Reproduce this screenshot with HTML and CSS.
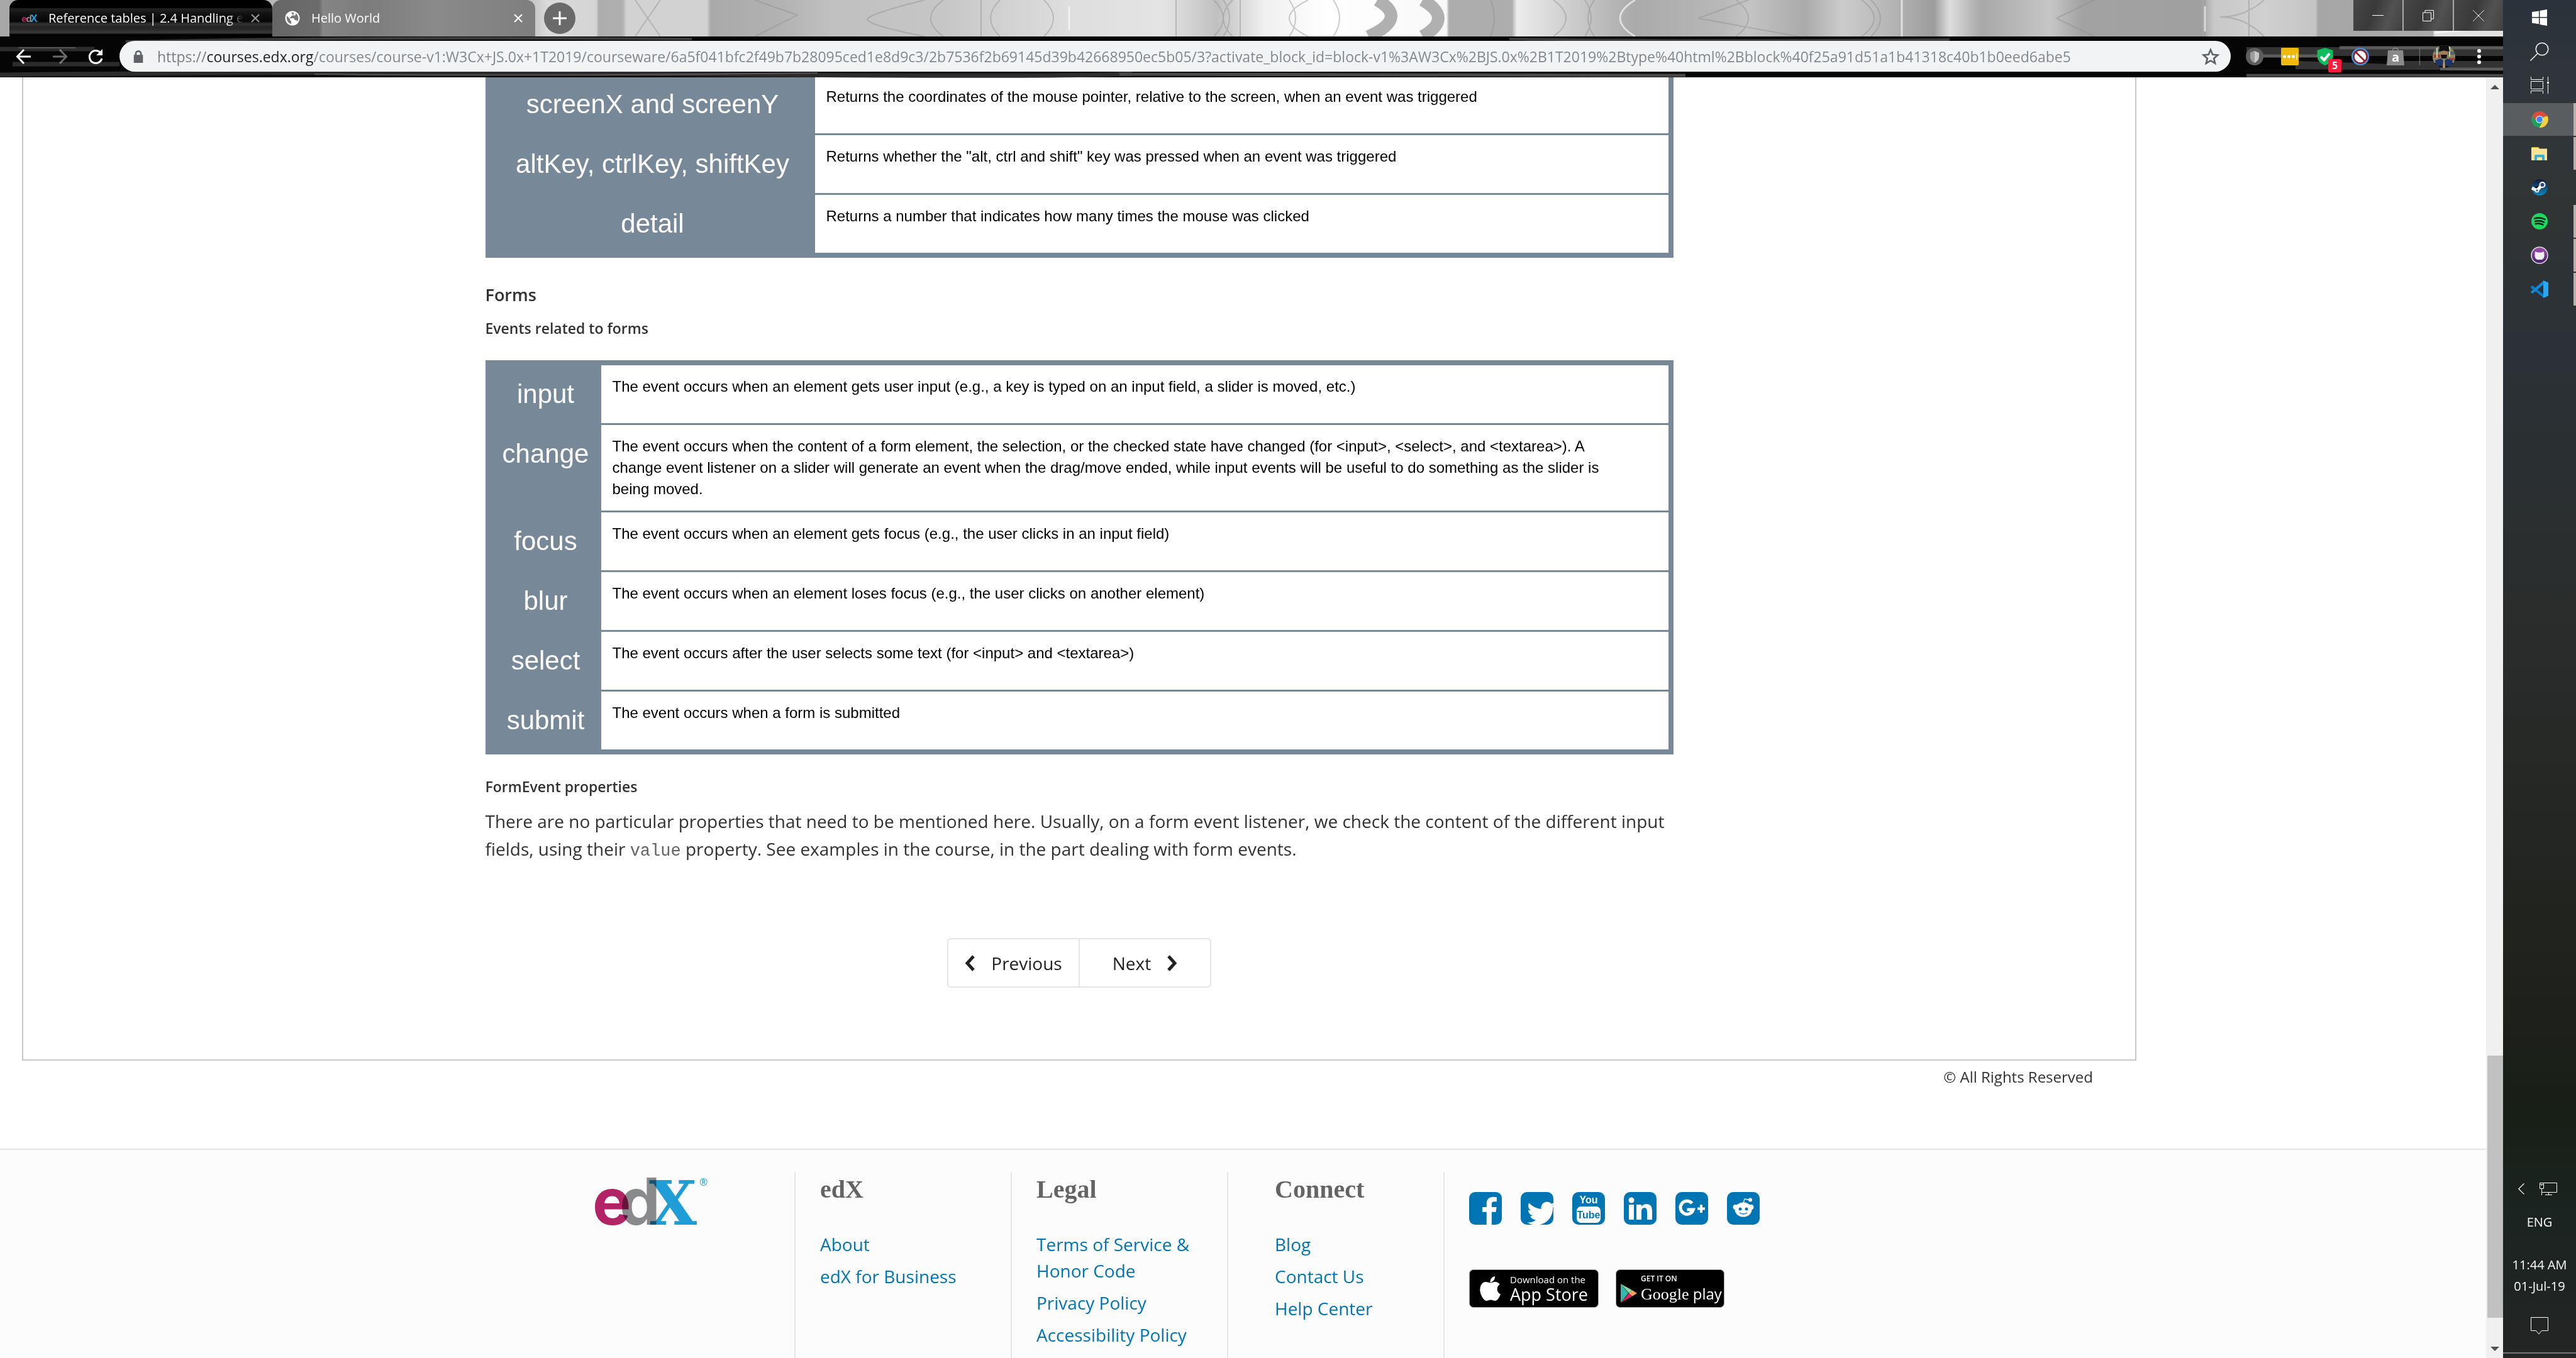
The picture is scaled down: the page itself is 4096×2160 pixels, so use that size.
FILE: index.html
```html
<!DOCTYPE html>
<html lang="en">
<head>
<meta charset="utf-8">
<title>Reference tables | 2.4 Handling events</title>
<link rel="stylesheet" href="styles.css">
</head>
<body>
<div class="browser">
  <header class="tabstrip">
    <svg class="tabstrip-art" viewBox="0 0 3980 58" preserveAspectRatio="none" aria-hidden="true">
      <g fill="none" stroke="#8f8f8f" stroke-width="2" opacity=".45">
        <path d="M1010 0l40 58M1050 0l-40 58M1200 0l68 24-68 34M1470 0q-80 20-90 29t90 29M1500 0q-40 29 0 58M1560 0v58M1590 0q-30 29 0 58M1660 0q30 29 0 58M1870 0v58M1930 0q30 29 0 58M1945 0q20 29 0 58M1960 0q-30 29 0 58M1972 0v58M2080 0q-60 29 0 58M2050 0q20 29 0 58M2120 0q20 29 0 58M2370 0q12 29 0 58M2470 0q40 29 0 58M2520 0q20 29 0 58M2535 0q-20 29 0 58M2700 29l80-29M2700 29l160 29M2760 0q40 29 0 58M2960 0q40 29 0 58M2975 0q30 29 0 58M3270 29l60-29M3270 29l60 29M3506 0v58M3530 27q40 0 70-27M3530 27q40 0 70 31M3576 0v58"/>
      </g>
      <g fill="none" stroke="#fff" stroke-width="3" opacity=".6">
        <path d="M2180 0q30 29 0 58M2600 0q-48 29 0 58M3024 0v58M1700 10v38M3506 10v40M3870 52l100-8"/>
      </g>
      <g fill="none" stroke="#b0b0b0" stroke-width="20">
        <path d="M2190 0q50 29 -14 58M2262 0q50 29 0 58"/>
      </g>
    </svg>
    <nav class="tabs" aria-label="Tabs">
      <div class="tab tab-current">
        <svg class="favicon" viewBox="0 0 30 30"><text x="-1" y="22" class="fav-e">e</text><text x="8" y="22" class="fav-d">d</text><text x="17" y="22" class="fav-x">X</text></svg>
        <span class="tab-title tab-title-fade">Reference tables | 2.4 Handling ev</span>
        <button class="tab-close" aria-label="Close tab"><svg viewBox="0 0 14 14"><path d="M1 1l12 12M13 1L1 13"/></svg></button>
      </div>
      <div class="tab tab-other">
        <svg class="favicon" viewBox="0 0 24 24"><circle cx="12" cy="12" r="11.5" fill="#fff"/><path fill="#777" d="M3 8l5 5v2l2 2v4C5 20 2 15 3 8zM10 3h4v3l-2 2h-2v2H8v2h6l2 3h2l2 2c3-5 1-10-3-13v3l-3 1z"/></svg>
        <span class="tab-title">Hello World</span>
        <button class="tab-close tab-close-strong" aria-label="Close tab"><svg viewBox="0 0 14 14"><path d="M1 1l12 12M13 1L1 13"/></svg></button>
      </div>
      <button class="new-tab" aria-label="New tab"><svg viewBox="0 0 22 22"><path d="M11 0v22M0 11h22"/></svg></button>
    </nav>
    <div class="window-buttons">
      <button aria-label="Minimize"><svg viewBox="0 0 20 20"><path d="M1 9.500h18"/></svg></button>
      <button aria-label="Restore"><svg viewBox="0 0 20 20"><path d="M1.500 5h13v13.500h-13zM5 5V1.500h13.500V15H15"/></svg></button>
      <button aria-label="Close"><svg viewBox="0 0 20 20"><path d="M1 1l18 18M19 1L1 19"/></svg></button>
    </div>
  </header>

  <div class="toolbar">
    <svg class="toolbar-art" viewBox="0 0 3980 65" preserveAspectRatio="none" aria-hidden="true">
      <g fill="none">
        <path stroke="#3c3c3c" stroke-width="4" d="M200 8q400-8 900-4M2400 4q300 4 700 1"/>
        <path stroke="#2c2c2c" stroke-width="7" d="M0 20h150M20 44h170M0 61q500-6 1100-1t700-1"/>
        <path stroke="#555" stroke-width="2" d="M30 18h90M500 60q300 4 800-2M1780 60l900 3"/>
        <path stroke="#484848" stroke-width="5" d="M1780 60q500 2 900 2M3572 62h408"/>
        <path stroke="#333" stroke-width="14" d="M3572 24h408M3650 46h330"/>
        <path stroke="#5c5c5c" stroke-width="5" d="M3720 18h260M3590 31h120M3880 52h100"/>
        <path stroke="#0a0a0a" stroke-width="5" d="M3572 54l408 3M3640 36l180 6"/>
      </g>
    </svg>
    <button class="nav-btn" aria-label="Back"><svg viewBox="0 0 24 24"><path d="M23 12H2M12 1L1.500 12 12 23"/></svg></button>
    <button class="nav-btn nav-btn-dim" aria-label="Forward"><svg viewBox="0 0 24 24"><path d="M1 12h21M12 1l10.500 11L12 23"/></svg></button>
    <button class="nav-btn" aria-label="Reload"><svg viewBox="0 0 24 24"><path d="M20 6a10 10 0 1 0 2 9"/><path class="solid" d="M23 0v10H13z"/></svg></button>
    <div class="omnibox">
      <svg class="lock" viewBox="0 0 16 22"><path fill="#5f6368" d="M2 8V6a6 6 0 0 1 12 0v2h2v14H0V8zm3 0h6V6a3 3 0 0 0-6 0z"/></svg>
      <input class="url" aria-label="Address" value="https://courses.edx.org/courses/course-v1:W3Cx+JS.0x+1T2019/courseware/6a5f041bfc2f49b7b28095ced1e8d9c3/2b7536f2b69145d39b42668950ec5b05/3?activate_block_id=block-v1%3AW3Cx%2BJS.0x%2B1T2019%2Btype%40html%2Bblock%40f25a91d51a1b41318c40b1b0eed6abe5">
      <button class="star" aria-label="Bookmark"><svg viewBox="0 0 26 26"><path fill="none" stroke="#5f6368" stroke-width="2.500" d="M13 3l3 7 7.500.700-5.700 5 1.800 7.300L13 19l-6.600 4 1.800-7.300-5.700-5L10 10z"/></svg></button>
    </div>
    <div class="extensions">
      <button aria-label="Shield extension"><svg viewBox="0 0 28 28"><circle cx="14" cy="14" r="14" fill="#5d5d5d"/><path fill="#c8c8c8" d="M14 5l7 3v7q-1 6-7 9-6-3-7-9V8z"/><path fill="#9c9c9c" d="M14 5v19q-6-3-7-9V8z"/></svg></button>
      <button aria-label="Password extension"><svg viewBox="0 0 28 28"><rect width="28" height="28" rx="2" fill="#f0b90e"/><g fill="#fff"><circle cx="5.500" cy="14" r="2.500"/><circle cx="12.500" cy="14" r="2.500"/><circle cx="19.500" cy="14" r="2.500"/><path d="M24 9h1.500v10H24z"/></g></svg></button>
      <button aria-label="Blocker extension" class="has-badge"><svg viewBox="0 0 28 28"><path fill="#0fbc5a" d="M14 0l12.500 4v10q-1 10-12.500 14Q2.500 24 1.500 14V4z"/><path fill="none" stroke="#fff" stroke-width="4" d="M7 14l5.500 5.500L21 9"/></svg><span class="badge">5</span></button>
      <button aria-label="Deny extension"><svg viewBox="0 0 28 28"><circle cx="14" cy="14" r="14" fill="#3f95e8"/><circle cx="14" cy="14" r="10.500" fill="#fff" stroke="#8d2027" stroke-width="2.500"/><path stroke="#8d2027" stroke-width="2.500" d="M7 7l14 14"/></svg></button>
      <button aria-label="Shopping extension"><svg viewBox="0 0 28 28"><path fill="#8a8a8a" d="M2 4h24l2 24H0z"/><path fill="none" stroke="#8a8a8a" stroke-width="1.500" d="M9 7q0-7 5-6.500T19 7"/><text x="14" y="22" class="ext-letter">a</text></svg></button>
      <span class="toolbar-divider"></span>
      <button class="avatar" aria-label="Profile"><svg viewBox="0 0 36 36"><clipPath id="av"><circle cx="18" cy="18" r="18"/></clipPath><g clip-path="url(#av)"><path fill="#8b8268" d="M0 0h36v36H0z"/><path fill="#4a6a62" d="M0 6h12v5H0zM24 10h12v5H24z"/><path fill="#a0442f" d="M2 15h10v5H2zM26 20h10v4H26z"/><path fill="#d6cfae" d="M6 2h2v18H6zM26 2h2v16h-2z"/><path fill="#0d1012" d="M11 0h14l2 10-9-3-8 3zM0 28h36v8H0z"/><ellipse cx="18" cy="13" rx="5.500" ry="7" fill="#a47a59"/><path fill="#111" d="M11 6q7-6 14 0l-1 4q-6-3-12 0zM13 15h10l-1 6h-8z"/><path fill="#1c3466" d="M4 24l9-3 5 4 5-4 9 3-2 9H6z"/><path fill="#c39a55" d="M17 24h2l1 12h-4z"/></g></svg></button>
      <button class="menu" aria-label="Menu"><svg viewBox="0 0 6 24"><g fill="#fff"><circle cx="3" cy="3" r="3"/><circle cx="3" cy="12" r="3"/><circle cx="3" cy="21" r="3"/></g></svg></button>
    </div>
  </div>

  <div class="viewport">
    <div class="page">
      <main class="course">
        <article class="lesson">
          <table class="events events-mouse">
            <tr><th scope="row">screenX and screenY</th><td>Returns the coordinates of the mouse pointer, relative to the screen, when an event was triggered</td></tr>
            <tr><th scope="row">altKey, ctrlKey, shiftKey</th><td>Returns whether the "alt, ctrl and shift" key was pressed when an event was triggered</td></tr>
            <tr><th scope="row">detail</th><td>Returns a number that indicates how many times the mouse was clicked</td></tr>
          </table>
          <h3>Forms</h3>
          <h4>Events related to forms</h4>
          <table class="events events-form">
            <tr><th scope="row">input</th><td>The event occurs when an element gets user input (e.g., a key is typed on an input field, a slider is moved, etc.)</td></tr>
            <tr><th scope="row">change</th><td>The event occurs when the content of a form element, the selection, or the checked state have changed (for &lt;input&gt;, &lt;select&gt;, and &lt;textarea&gt;). A change event listener on a slider will generate an event when the drag/move ended, while input events will be useful to do something as the slider is being moved.</td></tr>
            <tr><th scope="row">focus</th><td>The event occurs when an element gets focus (e.g., the user clicks in an input field)</td></tr>
            <tr><th scope="row">blur</th><td>The event occurs when an element loses focus (e.g., the user clicks on another element)</td></tr>
            <tr><th scope="row">select</th><td>The event occurs after the user selects some text (for &lt;input&gt; and &lt;textarea&gt;)</td></tr>
            <tr><th scope="row">submit</th><td>The event occurs when a form is submitted</td></tr>
          </table>
          <h4>FormEvent properties</h4>
          <p>There are no particular properties that need to be mentioned here. Usually, on a form event listener, we check the content of the different input fields, using their <code>value</code> property. See examples in the course, in the part dealing with form events.</p>
          <nav class="sequence" aria-label="Sequence">
            <button><svg viewBox="0 0 16 26"><path d="M14 2L4 13l10 11"/></svg>Previous</button>
            <button>Next<svg viewBox="0 0 16 26"><path d="M2 2l10 11L2 24"/></svg></button>
          </nav>
        </article>
      </main>
      <p class="rights">© All Rights Reserved</p>

      <footer class="footer">
        <div class="footer-grid">
          <a class="logo" href="#" aria-label="edX"><svg viewBox="0 0 180 76">
            <text x="-3" y="75" class="logo-e">e</text><text x="40" y="75" class="logo-d">d</text><text x="87" y="75" class="logo-x">X</text><text x="167" y="13" class="logo-r">®</text></svg></a>
          <section><h2>edX</h2>
            <ul><li><a href="#">About</a></li><li><a href="#">edX for Business</a></li></ul></section>
          <section><h2>Legal</h2>
            <ul><li><a href="#">Terms of Service &amp; Honor Code</a></li><li><a href="#">Privacy Policy</a></li><li><a href="#">Accessibility Policy</a></li></ul></section>
          <section class="connect"><h2>Connect</h2>
            <ul><li><a href="#">Blog</a></li><li><a href="#">Contact Us</a></li><li><a href="#">Help Center</a></li></ul></section>
          <div class="outlets">
            <div class="social">
              <a href="#" aria-label="Facebook"><svg viewBox="128 128 1536 1536"><path fill="#0075b4" d="M1376 128q119 0 203.500 84.500t84.500 203.500v960q0 119-84.500 203.500t-203.500 84.500h-188v-595h199l30-232h-229v-148q0-56 23.500-84t91.500-28l122-1v-207q-63-9-178-9-136 0-217.500 80t-81.500 226v171h-200v232h200v595h-532q-119 0-203.500-84.500t-84.500-203.500v-960q0-119 84.500-203.500t203.500-84.500h960z"/></svg></a>
              <a href="#" aria-label="Twitter"><svg viewBox="0 0 52 52"><rect width="52" height="52" rx="10" fill="#0075b4"/><svg x="7" y="8" width="38" height="38" viewBox="0 0 1792 1792"><path fill="#fff" d="M1684 408q-67 98-162 167 1 14 1 42 0 130-38 259.500t-115.500 248.500-184.500 210.500-258 146-323 54.500q-271 0-496-145 35 4 78 4 225 0 401-138-105-2-188-64.500t-114-159.500q33 5 61 5 43 0 85-11-112-23-185.500-111.500t-73.500-205.500v-4q68 38 146 41-66-44-105-115t-39-154q0-88 44-163 121 149 294.500 238.500t371.500 99.500q-8-38-8-74 0-134 94.500-228.500t228.500-94.500q140 0 236 102 109-21 205-78-37 115-142 178 93-10 186-50z"/></svg></svg></a>
              <a href="#" aria-label="YouTube"><svg viewBox="0 0 52 52"><rect width="52" height="52" rx="10" fill="#0075b4"/><rect x="7" y="23" width="38" height="26" rx="7" fill="#fff"/><text x="26" y="18" class="yt-you">You</text><text x="26" y="42" class="yt-tube">Tube</text></svg></a>
              <a href="#" aria-label="LinkedIn"><svg viewBox="0 0 52 52"><rect width="52" height="52" rx="10" fill="#0075b4"/><g fill="#fff"><circle cx="12" cy="13" r="4.500"/><path d="M8 20h8v24H8zM20 20h8v3q3-4 8-4 9 0 9 11v14h-8V32q0-7-4-7-5 0-5 6v13h-8z"/></g></svg></a>
              <a href="#" aria-label="Google Plus"><svg viewBox="0 0 52 52"><rect width="52" height="52" rx="10" fill="#0075b4"/><path fill="none" stroke="#fff" stroke-width="5" d="M26.500 18a10.500 10.500 0 1 0 2 10H18.500"/><path fill="#fff" d="M39 20h4v4.500h4v4h-4V33h-4v-4.500h-4v-4h4z"/></svg></a>
              <a href="#" aria-label="Reddit"><svg viewBox="0 0 52 52"><rect width="52" height="52" rx="10" fill="#0075b4"/><g fill="#fff"><ellipse cx="26" cy="28" rx="13.500" ry="11.500"/><circle cx="13.500" cy="24" r="4"/><circle cx="38.500" cy="24" r="4"/><circle cx="37" cy="12.500" r="3"/></g><path fill="none" stroke="#fff" stroke-width="1.500" d="M26 18l2-7 8 1.500"/><circle cx="21" cy="27" r="2.500" fill="#0075b4"/><circle cx="31" cy="27" r="2.500" fill="#0075b4"/><path fill="none" stroke="#0075b4" stroke-width="1.500" d="M20 33q6 4 12 0"/></svg></a>
            </div>
            <div class="stores">
              <a class="store" href="#"><svg class="apple" viewBox="300 0 1300 1700"><path fill="#fff" d="M1585 1215q-39 125-123 250-129 196-257 196-49 0-140-32-86-32-151-32-61 0-142 33-81 34-132 34-152 0-301-259-147-261-147-503 0-228 113-374 113-144 284-144 72 0 177 30 104 30 138 30 45 0 143-34 102-34 173-34 119 0 213 65 52 36 104 100-79 67-114 118-65 94-65 207 0 124 69 223t158 126zm-376-1173q0 61-29 136-30 75-93 138-54 54-108 72-37 11-104 17 3-149 78-257 74-107 250-148 1 3 2.500 11t2.500 11q0 4 .500 10t.500 10z"/></svg>
                <span class="store-text"><small>Download on the</small><strong>App Store</strong></span></a>
              <a class="store store-google" href="#"><svg class="play" viewBox="0 0 27 30"><path fill="#33b8b0" d="M1 0v30l12-15z"/><path fill="#8bd4a0" d="M1 0l18 10-5 5z"/><path fill="#f0a35c" d="M19 10l8 5-8 5-5-5z"/><path fill="#e0215f" d="M14 15l5 5L1 30z"/></svg>
                <span class="store-text"><small>GET IT ON</small><strong><span class="google">Google</span> play</strong></span></a>
            </div>
          </div>
        </div>
      </footer>
    </div>
    <div class="scrollbar" aria-hidden="true">
      <svg viewBox="0 0 14 7"><path fill="#505050" d="M7 0l7 7H0z"/></svg>
      <div class="track"><div class="thumb"></div></div>
      <svg viewBox="0 0 14 7"><path fill="#505050" d="M0 0h14L7 7z"/></svg>
    </div>
  </div>
</div>

<aside class="taskbar">
  <div class="apps">
    <button aria-label="Start"><svg viewBox="0 0 28 28"><path fill="#fff" d="M2 5l11-1.600V13H2zM14.500 3L26 1v12H14.500zM2 14.500h11v9.800L2 22.500zM14.500 14.500H26V27l-11.500-2z"/></svg></button>
    <button aria-label="Search"><svg class="big" viewBox="0 0 30 30"><circle cx="19" cy="11" r="9.800" fill="none" stroke="#fff" stroke-width="1.500"/><path stroke="#fff" stroke-width="1.500" d="M12 18L.500 29.500"/></svg></button>
    <button aria-label="Task view"><svg viewBox="0 0 28 28"><path fill="none" stroke="#fff" d="M.500 0v4.500h19V0M.500 7.500h19v12H.500zM.500 27v-4.500h19V27M27.500 0v7M27.500 12v15"/><path fill="#fff" d="M26 8h3v3h-3z"/></svg></button>
    <button aria-label="Chrome" class="active running"><svg viewBox="0 0 28 28"><circle cx="14" cy="14" r="13" fill="#1fa05a"/><path fill="#fdd03f" d="M14 14h-0l12-6.500A13 13 0 0 1 13.500 27l6.500-11z"/><path fill="#de4b3e" d="M2.500 8A13 13 0 0 1 26 9H14L8 16z"/><circle cx="14" cy="14" r="6" fill="#e8eef7"/><circle cx="14" cy="14" r="4.800" fill="#4285f4"/></svg></button>
    <button aria-label="File Explorer" class="running"><svg viewBox="0 0 28 28"><path fill="#f0b429" d="M1 4h11l2 2H3z"/><path fill="#fce391" d="M1 5h11l2 1.500h12V25H1z"/><path fill="#3aa9e0" d="M6 25v-7q0-2 2-2h12q2 0 2 2v7h-4v-5h-8v5z"/></svg></button>
    <button aria-label="Steam"><svg viewBox="0 0 28 28"><defs><linearGradient id="st" x2="0" y2="1"><stop stop-color="#151a3c"/><stop offset="1" stop-color="#0f86bd"/></linearGradient></defs><circle cx="14" cy="14" r="13" fill="url(#st)"/><path stroke="#fff" stroke-width="5" d="M2 15l8 4 8-9"/><circle cx="18.500" cy="10" r="4" fill="#2b4a80" stroke="#fff" stroke-width="2"/><circle cx="10" cy="19" r="2.500" fill="#2a6ea5" stroke="#fff" stroke-width="1.500"/></svg></button>
    <button aria-label="Spotify" class="running"><svg viewBox="0 0 28 28"><circle cx="14" cy="14" r="13" fill="#1ed760"/><path fill="none" stroke="#191b1c" stroke-width="2.500" stroke-linecap="round" d="M6 9.500q9-2.500 16.500 1.500M7 14q8-2 14 1.500M7.500 18q7-1.500 12 1.500"/></svg></button>
    <button aria-label="GitHub Desktop" class="running"><svg viewBox="0 0 28 28"><defs><linearGradient id="gh" x2="0" y2="1"><stop stop-color="#a74bb5"/><stop offset="1" stop-color="#43206e"/></linearGradient></defs><circle cx="14" cy="14" r="13" fill="url(#gh)" stroke="#ddd" stroke-width="1.500"/><path fill="#f2f2f2" d="M7 8l4 1.500h6L21 8l.500 4q1 7-4 9h-7q-5-2-4-9z"/></svg></button>
    <button aria-label="Visual Studio Code" class="running"><svg viewBox="0 0 28 28"><path fill="#0a79c4" d="M0 10l3-2 18 15v5L0 12z"/><path fill="#1389d6" d="M0 18L21 0v6L3 21l-3-2z"/><path fill="#2aa7f2" d="M20 0l8 3.500v21L20 28z"/></svg></button>
  </div>
  <div class="tray">
    <div class="tray-icons">
      <svg class="tray-chevron" viewBox="0 0 10 18"><path fill="none" stroke="#fff" stroke-width="1.200" d="M9.500.500L.800 9l8.700 8.500"/></svg>
      <svg class="tray-net" viewBox="0 0 28 20"><path fill="none" stroke="#fff" d="M6.500.500h21v15H3.500M.500.500h6v9h-6zM.500 3h6M3.500 3v2M3.500 9.500V20M14.500 16v3M9 19.500h11"/></svg>
    </div>
    <span class="lang">ENG</span>
    <time class="clock">11:44 AM<br>01-Jul-19</time>
    <button class="notes" aria-label="Notifications"><svg viewBox="0 0 28 28"><path fill="none" stroke="#fff" d="M.500.500h27v21h-10l-4.500 5.500-4.500-5.500h-8z"/></svg></button>
    <span class="show-desktop"></span>
  </div>
</aside>
</body>
</html>
```
FILE: styles.css
```css
* { box-sizing: border-box; }

body {
  margin: 0;
  height: 100vh;
  display: flex;
  overflow: hidden;
  background: #fff;
  color: #313131;
  font: 28px/44px "Open Sans", sans-serif;
}

button {
  margin: 0;
  padding: 0;
  border: 0;
  background: none;
  color: inherit;
  font: inherit;
}

svg { display: block; overflow: visible; }
a { color: #0075b4; text-decoration: none; }

.browser { flex: 1; min-width: 0; display: flex; flex-direction: column; }

/* Tab strip */
.tabstrip {
  position: relative;
  height: 58px;
  display: flex;
  justify-content: space-between;
  align-items: flex-start;
  background: linear-gradient(90deg,
    #a8a8a8 0, #a8a8a8 16px, #c8c8c8 850px, #dadada 870px, #d4d4d4 948px,
    #adadad 952px, #b0b0b0 990px, #d2d2d2 996px, #d2d2d2 1124px, #a9a9a9 1130px,
    #b2b2b2 1240px, #c0c0c0 1320px, #c6c6c6 1500px, #dedede 1700px, #e4e4e4 1850px,
    #c0c0c0 1935px, #f0f0f0 2010px, #fff 2110px, #f8f8f8 2300px, #adadad 2304px,
    #adadad 2404px, #ececec 2412px, #ccc 2500px, #aaa 2600px, #b8b8b8 2740px,
    #c4c4c4 2780px, #aaa 2870px, #ccc 2930px, #b4b4b4 3010px, #9c9c9c 3075px,
    #dedede 3100px, #a8a8a8 3150px, #c6c6c6 3260px, #a2a2a2 3310px, #a0a0a0 3500px,
    #c8c8c8 3520px, #d0d0d0 3600px, #c4c4c4 3682px, #a6a6a6 3686px, #aaa 3868px, #e2e2e2 3872px);
}
.tabstrip-art, .toolbar-art { position: absolute; inset: 0; width: 100%; height: 100%; }
.tabs { position: relative; display: flex; align-items: center; padding-left: 15px; height: 58px; }
.tab {
  width: 418px;
  height: 58px;
  display: flex;
  align-items: center;
  padding: 0 20px;
  border-radius: 14px 14px 0 0;
  color: #fff;
  font-size: 20px;
  line-height: 28px;
}
.tab-current { background: linear-gradient(#000 0, #000 12px, #222 14px, #111 22px, #060606 34px, #333 38px, #222 44px, #3a3a3a 52px, #000 55px); }
.tab-other { background: linear-gradient(90deg, #666 0, #6c6c6c 75px, #858585 80px, #7c7c7c 150px, #8a8a8a 260px, #7e7e7e); }
.favicon { flex: none; width: 24px; height: 24px; margin-right: 18px; overflow: hidden; }
.tab-current .favicon { overflow: visible; }
.tab-title { flex: 1; white-space: nowrap; overflow: hidden; }
.tab-title-fade { -webkit-mask-image: linear-gradient(90deg, #000 92%, transparent); mask-image: linear-gradient(90deg, #000 92%, transparent); }
.tab-close { width: 14px; margin-left: 12px; }
.tab-close svg { width: 14px; height: 14px; fill: none; stroke: #999; stroke-width: 2; }
.tab-close-strong svg { stroke: #fff; }
.new-tab { width: 50px; height: 50px; margin-left: 14px; border-radius: 50%; background: #6a6a6a; display: flex; align-items: center; justify-content: center; }
.new-tab svg { width: 22px; height: 22px; fill: none; stroke: #fff; stroke-width: 3; }
.fav-e, .fav-d, .fav-x { font: bold 19px "Liberation Sans", sans-serif; }
.fav-e { fill: #b52467; }
.fav-d { fill: #8b8c8e; }
.fav-x { fill: #1f9fd9; font-size: 21px; }

.window-buttons { position: relative; display: flex; gap: 2px; background: #aaa; }
.window-buttons button {
  width: 78px;
  height: 49px;
  display: flex;
  align-items: center;
  justify-content: center;
  background: linear-gradient(110deg, #474747, #3a3a3a 40%, #525252 70%, #404040);
}
.window-buttons svg { width: 20px; height: 20px; fill: none; stroke: #fff; stroke-width: 1; }

/* Toolbar */
.toolbar { position: relative; height: 65px; display: flex; align-items: center; padding: 0 35px 2px 26px; background: #050505; }
.nav-btn { position: relative; width: 24px; margin-right: 33px; }
.nav-btn svg { width: 24px; height: 24px; fill: none; stroke: #fff; stroke-width: 3; }
.nav-btn .solid { fill: #fff; stroke: none; }
.nav-btn-dim { opacity: .4; }
.omnibox { position: relative; flex: 1; height: 49px; margin-right: 24px; padding: 0 18px 0 22px; display: flex; align-items: center; border-radius: 25px; background: #f1f3f4; margin-left: -7px; }
.lock { width: 16px; height: 20px; margin-right: 22px; }
.url {
  flex: 1;
  min-width: 0;
  height: 40px;
  padding: 0;
  border: 0;
  outline: 0;
  font: 23px "Open Sans", sans-serif;
  color: transparent;
  background: linear-gradient(90deg, #777b80 0, #777b80 79px, #202124 79px, #202124 249px, #80868b 249px);
  -webkit-background-clip: text;
  background-clip: text;
}
.star svg { width: 28px; height: 28px; }
.extensions { position: relative; display: flex; align-items: center; gap: 28px; }
.extensions svg { width: 28px; height: 28px; }
.has-badge { position: relative; }
.badge { position: absolute; left: 19px; top: 18px; width: 21px; height: 21px; border-radius: 3px; background: #fb1d3d; color: #fff; font: bold 16px/21px "Open Sans", sans-serif; text-align: center; }
.ext-letter { fill: #fff; font: bold 20px "Open Sans", sans-serif; text-anchor: middle; }
.toolbar-divider { width: 1px; height: 28px; margin-left: -4px; background: #777; }
.extensions .avatar { margin-left: -8px; }
.extensions .avatar svg { width: 36px; height: 36px; }
.menu { margin-left: 7px; }
.extensions .menu svg { width: 6px; height: 24px; }

/* Scrolled page */
.viewport { flex: 1; min-height: 0; display: flex; }
.page { flex: 1; min-width: 0; overflow: hidden; display: flex; flex-direction: column; }
.course { margin: 0 556px 0 35px; padding-bottom: 114px; border: 2px solid #c8c8c8; border-top: 0; }
.lesson { max-width: 1889px; margin: 0 auto; }

.events { width: 100%; border: 8px solid #778899; border-spacing: 0; font: 24px/34px "Liberation Sans", Arial, sans-serif; color: #000; }
.events-mouse { margin-top: -3px; border-top: 0; }
.events th { padding: 17px 0; border-bottom: 3px solid #778899; background: #778899; color: #fff; font-size: 42px; font-weight: 400; line-height: 58px; vertical-align: top; }
.events td { padding: 17px 60px 17px 18px; border-bottom: 3px solid #778899; vertical-align: top; background: #fff; }
.events tr:last-child > * { border-bottom: 0; }
.events-mouse th { width: 516px; }
.events-form th { width: 176px; }

h3 { margin: 39px 0 16px; font-size: 27px; font-weight: 600; line-height: 40px; }
h4 { margin: 0; font-size: 23px; font-weight: 600; line-height: 34px; }
h3 + h4 { margin-bottom: 34px; }
.events + h4 { margin: 34px 0 16px; }
.lesson p { margin: 0; }
code { font: 27px/34px "Liberation Mono", monospace; color: #646464; }

.sequence { width: 420px; height: 79px; margin: 120px auto 0; display: flex; border: 2px solid #e5e5e5; border-radius: 6px; color: #222; }
.sequence button { flex: 1; display: flex; align-items: center; justify-content: center; gap: 26px; }
.sequence button + button { border-left: 2px solid #e5e5e5; }
.sequence svg { width: 16px; height: 26px; fill: none; stroke: #222; stroke-width: 5; }

.rights { margin: 9px 625px 97px 0; text-align: right; font-size: 24px; line-height: 34px; }

/* Footer */
.footer { flex: 1; display: flex; border-top: 2px solid #e5e5e5; background: #fcfcfc; padding-top: 35px; }
.footer-grid { flex: 1; max-width: 2115px; margin: 0 auto; display: grid; grid-template-columns: repeat(4, 344px) 1fr; line-height: 42px; }
.footer-grid section, .outlets { border-left: 2px solid #e5e5e5; padding: 8px 39px 0; }
.footer-grid .connect { padding-left: 74px; }
.logo { padding: 9px 0 0 26px; }
.logo svg { width: 180px; height: 76px; }
.logo text { mix-blend-mode: multiply; }
.logo-e, .logo-d { font: bold 103px "Inter", sans-serif; }
.logo-e { fill: #b52467; }
.logo-d { fill: #8b8c8e; }
.logo-x { font: bold 98px "DejaVu Serif", serif; fill: #1f9fd9; }
.logo-r { font: 16px "Open Sans", sans-serif; fill: #1f9fd9; }
h2 { margin: 0 0 46px; font: bold 40px/40px "Liberation Serif", serif; color: #646464; }
ul { margin: 0; padding: 0; list-style: none; display: flex; flex-direction: column; gap: 9px; }
.outlets { padding-top: 32px; }
.social { display: flex; gap: 30px; margin-bottom: 71px; }
.social svg { width: 52px; height: 52px; }
.yt-you, .yt-tube { font: bold 16px "Liberation Sans Narrow", "Liberation Sans", sans-serif; text-anchor: middle; fill: #fff; }
.yt-tube { fill: #0075b4; }
.stores { display: flex; gap: 27px; align-items: center; }
.store { width: 206px; height: 61px; display: flex; align-items: center; gap: 14px; padding-left: 18px; border: 1px solid #a6a6a6; border-radius: 7px; background: #000; color: #fff; }
.store-google { width: 173px; padding-left: 6px; gap: 6px; }
.apple { width: 32px; height: 40px; }
.play { width: 27px; height: 30px; margin-top: 14px; }
.store-text { display: flex; flex-direction: column; }
.store-text small { font-size: 15px; line-height: 18px; }
.store-text strong { font-size: 27px; font-weight: 400; line-height: 30px; white-space: nowrap; }
.store-google small { font-size: 12px; font-weight: 600; }
.store-google strong { font-size: 24px; }
.google { font-family: "Liberation Serif", serif; font-size: 26px; }

/* Page scrollbar */
.scrollbar { width: 27px; padding: 12px 0 11px; display: flex; flex-direction: column; align-items: center; background: #f0f0f0; }
.scrollbar svg { width: 14px; height: 7px; }
.track { flex: 1; align-self: stretch; display: flex; flex-direction: column; justify-content: flex-end; padding: 0 0 46px 2px; }
.thumb { height: 417px; background: #c1c1c1; }

/* Desktop taskbar */
.taskbar {
  width: 116px;
  display: flex;
  flex-direction: column;
  justify-content: space-between;
  background: linear-gradient(#2a323b 0, #30363a 8%, #313434 15%, #2b3136 25%, #2a2d2c 45%, #1e201b 75%, #181f17 82%, #1b2421 90%, #242525);
  color: #fff;
}
.apps { display: flex; flex-direction: column; gap: 2px; padding-top: 2px; }
.apps button { height: 52px; display: flex; align-items: center; justify-content: center; border-right: 4px solid transparent; padding-left: 4px; }
.apps svg { width: 28px; height: 28px; }
.apps .big { width: 30px; height: 30px; }
.apps .running { border-right-color: #b5b1ac; }
.apps .active { background: #595d5f; }
.tray { display: flex; flex-direction: column; align-items: center; font: 20px/34px "Open Sans", sans-serif; }
.tray-icons { display: flex; align-items: center; gap: 24px; margin: 0 6px 26px 0; }
.tray-chevron { width: 10px; height: 18px; }
.tray-net { width: 28px; height: 20px; }
.lang { margin-bottom: 34px; }
.clock { margin-bottom: 32px; text-align: center; }
.notes svg { width: 28px; height: 28px; }
.show-desktop { align-self: stretch; height: 2px; margin: 28px 0 7px; background: #777; }
```
